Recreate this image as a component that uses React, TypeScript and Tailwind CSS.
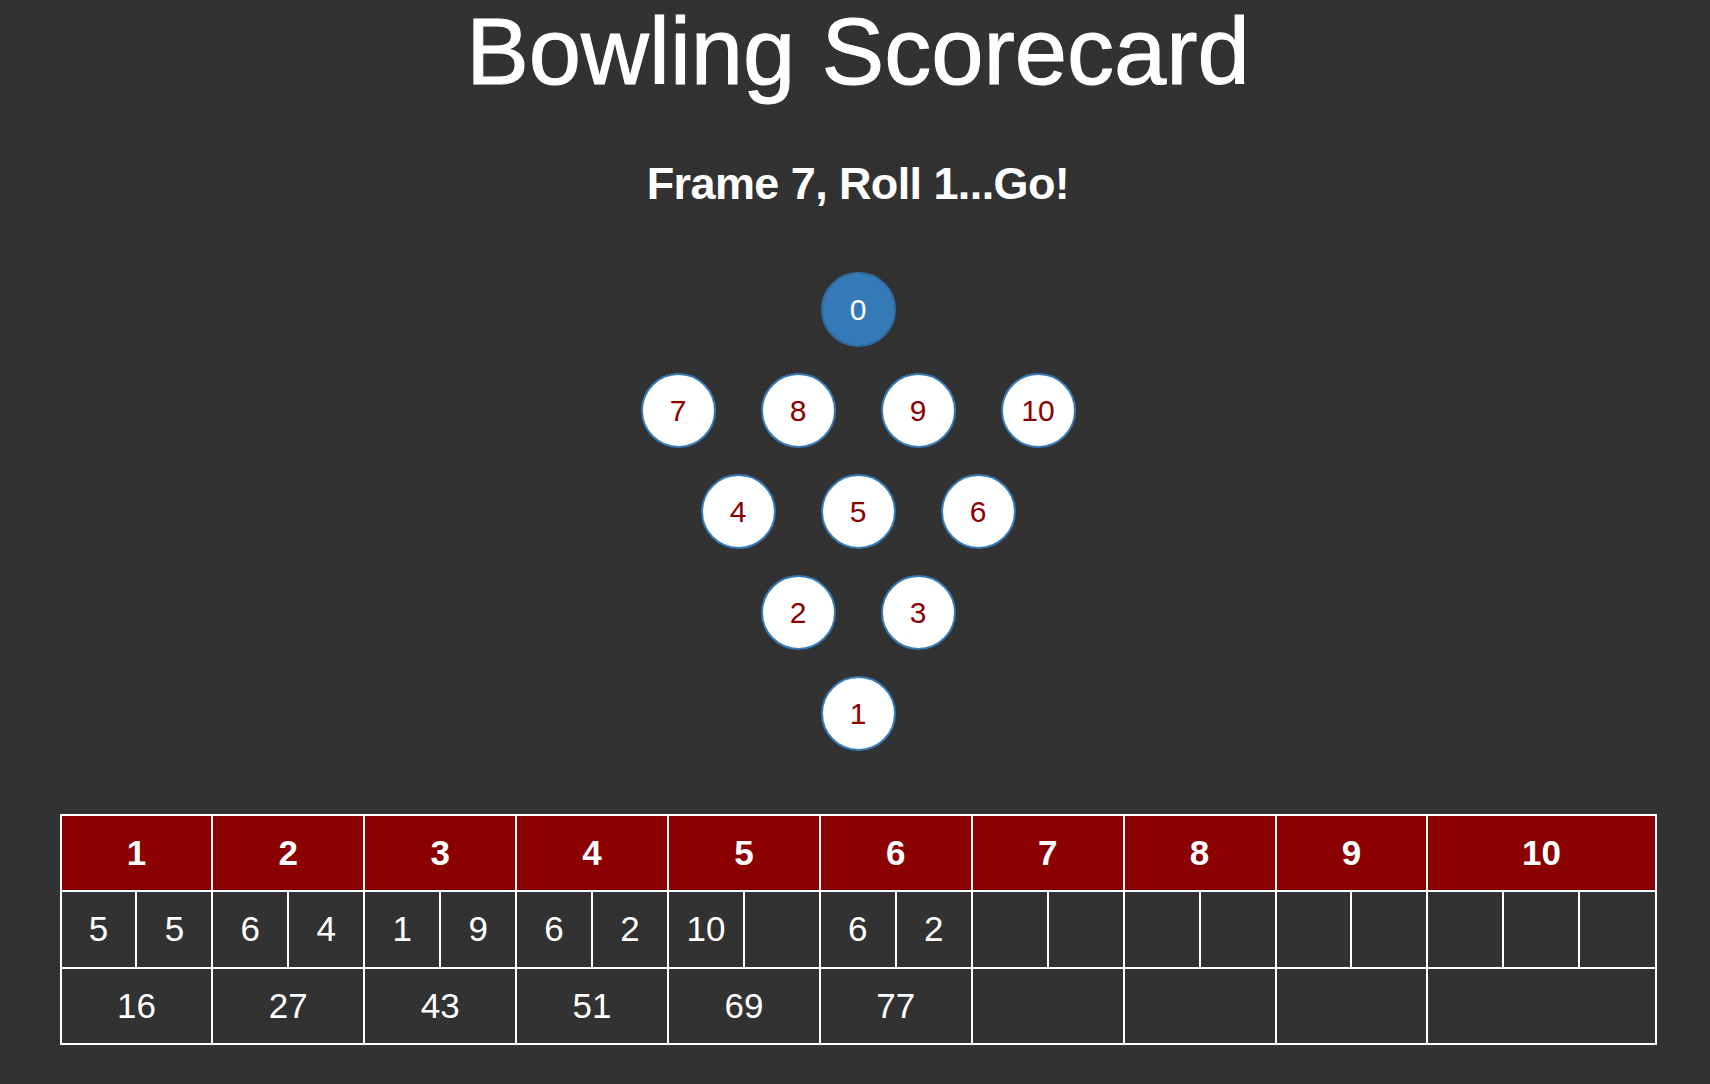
import React from "react"

type Frame = { rolls: (number | null)[]; score: number | null }

const FRAMES: Frame[] = [
  { rolls: [5, 5], score: 16 },
  { rolls: [6, 4], score: 27 },
  { rolls: [1, 9], score: 43 },
  { rolls: [6, 2], score: 51 },
  { rolls: [10, null], score: 69 },
  { rolls: [6, 2], score: 77 },
  { rolls: [null, null], score: null },
  { rolls: [null, null], score: null },
  { rolls: [null, null], score: null },
  { rolls: [null, null, null], score: null },
]

const PIN_ROWS = [[7, 8, 9, 10], [4, 5, 6], [2, 3], [1]]

function Pin({ value, active }: { value: number; active?: boolean }) {
  return (
    <button
      className={
        active
          ? "w-[75px] h-[75px] rounded-full flex items-center justify-center bg-[#337ab7] border-2 border-[#2e6da4] text-white text-[30px] leading-none"
          : "w-[75px] h-[75px] rounded-full flex items-center justify-center bg-white border-2 border-[#337ab7] text-[#8b0000] text-[30px] leading-none"
      }
    >
      {value}
    </button>
  )
}

export default function App() {
  return (
    <div
      className="min-h-screen bg-[#323232] text-white pl-[6px]"
      style={{ fontFamily: '"Liberation Sans", Arial, Helvetica, sans-serif' }}
    >
      <h1 className="pt-[5px] text-center text-[94px] leading-none font-normal [-webkit-text-stroke:1px_white]">
        Bowling Scorecard
      </h1>

      <h2 className="mt-[62px] text-center text-[45px] leading-none font-bold tracking-[-0.6px]">
        Frame 7, Roll 1...Go!
      </h2>

      {/* Pins */}
      <div className="mt-[66px] flex flex-col items-center gap-[26px]">
        <div className="flex justify-center">
          <Pin value={0} active />
        </div>
        {PIN_ROWS.map((row, i) => (
          <div key={i} className="flex justify-center gap-[45px]">
            {row.map((p) => (
              <Pin key={p} value={p} />
            ))}
          </div>
        ))}
      </div>

      {/* Scorecard */}
      <table className="mt-[63px] mx-auto w-[1597px] table-fixed border-collapse border-2 border-white">
        <tbody>
          <tr className="h-[76px] bg-[#8b0000]">
            {FRAMES.map((f, i) => (
              <th
                key={i}
                colSpan={f.rolls.length}
                className="border-2 border-white text-[35px] font-bold text-center"
              >
                {i + 1}
              </th>
            ))}
          </tr>
          <tr className="h-[77px]">
            {FRAMES.flatMap((f, i) =>
              f.rolls.map((r, j) => (
                <td key={`${i}-${j}`} className="w-[76px] border-2 border-white text-[35px] text-center">
                  {r ?? ""}
                </td>
              ))
            )}
          </tr>
          <tr className="h-[76px]">
            {FRAMES.map((f, i) => (
              <td key={i} colSpan={f.rolls.length} className="border-2 border-white text-[35px] text-center">
                {f.score ?? ""}
              </td>
            ))}
          </tr>
        </tbody>
      </table>
    </div>
  )
}
